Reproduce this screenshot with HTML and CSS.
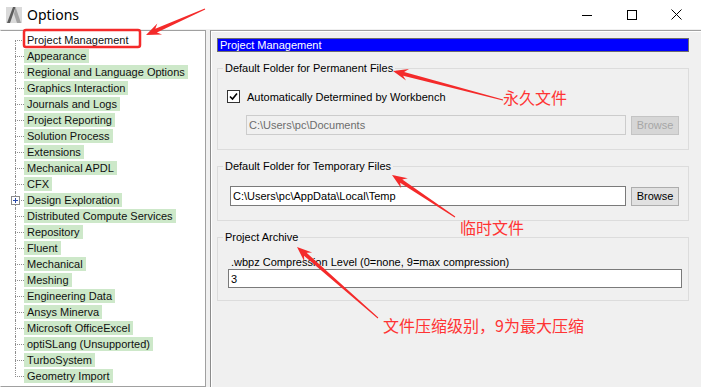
FILE: index.html
```html
<!DOCTYPE html>
<html lang="en">
<head>
    <meta charset="UTF-8">
    <meta name="viewport" content="width=device-width, initial-scale=1.0">
    <title>Options</title>
    <link rel="stylesheet" href="styles.css">
</head>
<body>
    <div class="window">
        <header class="titlebar">
            <svg class="app-icon" width="16" height="16" viewBox="0 0 16 16">
                <rect width="16" height="16" fill="#dadada"/>
                <polygon points="1,16 7,0 9.5,0 4,16" fill="#5c5c5c"/>
                <polygon points="9.5,0 15,16 11,16 8,7" fill="#a3a3a3"/>
            </svg>
            <span class="title">Options</span>
            <div class="controls">
                <span class="ctl">
                    <svg width="10" height="10" viewBox="0 0 10 10"><line x1="0" y1="5.5" x2="10" y2="5.5" stroke="#000"/></svg>
                </span>
                <span class="ctl">
                    <svg width="10" height="10" viewBox="0 0 10 10"><rect x="0.5" y="0.5" width="9" height="9" fill="none" stroke="#000"/></svg>
                </span>
                <span class="ctl">
                    <svg width="11" height="11" viewBox="0 0 11 11"><path d="M0.5,0.5 L10.5,10.5 M10.5,0.5 L0.5,10.5" stroke="#000"/></svg>
                </span>
            </div>
        </header>

        <div class="main">
            <ul class="tree">
                <li class="node"><span class="label plain">Project Management</span></li>
                <li class="node"><span class="label">Appearance</span></li>
                <li class="node"><span class="label">Regional and Language Options</span></li>
                <li class="node"><span class="label">Graphics Interaction</span></li>
                <li class="node"><span class="label">Journals and Logs</span></li>
                <li class="node"><span class="label">Project Reporting</span></li>
                <li class="node"><span class="label">Solution Process</span></li>
                <li class="node"><span class="label">Extensions</span></li>
                <li class="node"><span class="label">Mechanical APDL</span></li>
                <li class="node"><span class="label">CFX</span></li>
                <li class="node"><span class="expander"></span><span class="label">Design Exploration</span></li>
                <li class="node"><span class="label">Distributed Compute Services</span></li>
                <li class="node"><span class="label">Repository</span></li>
                <li class="node"><span class="label">Fluent</span></li>
                <li class="node"><span class="label">Mechanical</span></li>
                <li class="node"><span class="label">Meshing</span></li>
                <li class="node"><span class="label">Engineering Data</span></li>
                <li class="node"><span class="label">Ansys Minerva</span></li>
                <li class="node"><span class="label">Microsoft OfficeExcel</span></li>
                <li class="node"><span class="label">optiSLang (Unsupported)</span></li>
                <li class="node"><span class="label">TurboSystem</span></li>
                <li class="node"><span class="label">Geometry Import</span></li>
            </ul>

            <section class="panel">
                <div class="content">
                    <div class="bar">Project Management</div>

                    <div class="group">
                        <div class="group-title">Default Folder for Permanent Files</div>
                        <div class="check-row">
                            <span class="checkbox">
                                <svg width="11" height="11" viewBox="0 0 11 11"><path d="M2,5.5 L4.5,8 L9,2.5" fill="none" stroke="#000" stroke-width="1.6"/></svg>
                            </span>
                            <span>Automatically Determined by Workbench</span>
                        </div>
                        <div class="field-row row-perm">
                            <input class="field field-off field-perm" type="text" value="C:\Users\pc\Documents" readonly>
                            <button class="btn" disabled>Browse</button>
                        </div>
                    </div>

                    <div class="group">
                        <div class="group-title">Default Folder for Temporary Files</div>
                        <div class="field-row row-temp">
                            <input class="field field-temp" type="text" value="C:\Users\pc\AppData\Local\Temp">
                            <button class="btn">Browse</button>
                        </div>
                    </div>

                    <div class="group">
                        <div class="group-title">Project Archive</div>
                        <div class="zip-label">.wbpz Compression Level (0=none, 9=max compression)</div>
                        <input class="field field-zip" type="text" value="3">
                    </div>
                </div>
            </section>
        </div>

        <!-- screenshot markup -->
        <div class="annotations">
            <svg class="marks" width="701" height="387" viewBox="0 0 701 387">
                <rect x="24" y="30" width="116" height="17" rx="2" fill="none" stroke="#f42a2a" stroke-width="2.5"/>
                <polygon points="204.8,8.5 155.3,28.7 157.3,23.5 146,35 162.1,34.4 156.9,32.4 205.2,9.5" fill="#f42a2a"/>
                <polygon points="503.1,99.5 404.1,71.9 409.0,69.0 393,71 406.0,80.6 403.1,75.7 502.9,100.5" fill="#f42a2a"/>
                <polygon points="455.3,216.6 402.3,179.4 407.8,178.3 392,175 401.2,188.3 400.1,182.8 454.7,217.4" fill="#f42a2a"/>
                <polygon points="378.3,317.6 306.6,252.8 312.2,252.4 297,247 304.3,261.4 304.0,255.8 377.7,318.4" fill="#f42a2a"/>
            </svg>
            <span class="note note-perm">永久文件</span>
            <span class="note note-temp">临时文件</span>
            <span class="note note-zip">文件压缩级别，9为最大压缩</span>
        </div>
    </div>
</body>
</html>
```

FILE: styles.css
```css
* { margin: 0; padding: 0; box-sizing: border-box; }
body {
    width: 701px;
    height: 387px;
    overflow: hidden;
    background: #f0f0f0;
    color: #000;
    font-family: "Liberation Sans", Arial, sans-serif;
    font-size: 11px;
}
.window {
    position: relative;
    height: 387px;
}

/* title bar */
.titlebar {
    height: 29px;
    background: #fff;
    display: flex;
    align-items: center;
}
.app-icon { margin-left: 6px; }
.title {
    margin-left: 5px;
    font-family: "Noto Sans", sans-serif;
    font-size: 14px;
}
.controls {
    margin-left: auto;
    margin-right: 2px;
    display: flex;
    height: 100%;
}
.ctl {
    width: 45px;
    display: flex;
    align-items: center;
    justify-content: center;
}

/* layout */
.main {
    display: flex;
    padding-top: 1px;
    height: 358px;
}

/* tree */
.tree {
    list-style: none;
    width: 206px;
    flex-shrink: 0;
    background: #fff;
    border: 1px solid #a0a0a0;
    border-left-color: #fff;
    padding-top: 1px;
}
.node {
    position: relative;
    height: 16px;
    display: flex;
    align-items: center;
    padding-left: 23px;
}
.node::before {
    content: "";
    position: absolute;
    left: 14px;
    top: 8px;
    width: 9px;
    border-top: 1px dotted #8e8e8e;
}
.node::after {
    content: "";
    position: absolute;
    left: 14px;
    top: 0;
    bottom: 0;
    border-left: 1px dotted #8e8e8e;
}
.node:first-child::after { top: 8px; }
.node:last-child::after { bottom: 7px; }
.label {
    background: #cde8c9;
    padding: 0 3px;
    line-height: 14px;
    white-space: nowrap;
    color: #101010;
}
.label.plain { background: none; }
.expander {
    position: absolute;
    left: 10px;
    top: 4px;
    width: 9px;
    height: 9px;
    border: 1px solid #8a8a8a;
    background: #fff;
    z-index: 1;
}
.expander::before,
.expander::after {
    content: "";
    position: absolute;
    background: #2a4aa8;
}
.expander::before { left: 1px; top: 3px; width: 5px; height: 1px; }
.expander::after { left: 3px; top: 1px; width: 1px; height: 5px; }

/* options panel */
.panel {
    flex: 1;
    margin-left: 4px;
    border-top: 1px solid #a0a0a0;
    border-left: 1px solid #8c8c8c;
    box-shadow: inset 1px 1px 0 #fff;
    padding: 7px 0 0 6px;
}
.content { width: 472px; }
.bar {
    height: 14px;
    background: #0000ff;
    border: 1px solid #6d6d6d;
    color: #fff;
    line-height: 12px;
    padding-left: 2px;
}
.group {
    border: 1px solid #dcdcdc;
    margin-top: 16px;
}
.group-title {
    width: fit-content;
    margin: -7px 0 0 5px;
    padding: 0 2px;
    background: #f0f0f0;
    line-height: 13px;
}
.check-row {
    display: flex;
    align-items: center;
    gap: 7px;
    height: 13px;
    margin: 15px 0 0 9px;
}
.checkbox {
    width: 13px;
    height: 13px;
    border: 1px solid #333;
    background: #fff;
    display: flex;
}
.field-row {
    display: flex;
    align-items: center;
    gap: 5px;
}
.row-perm { margin: 12px 0 14px 28px; }
.row-temp { margin: 13px 0 14px 12px; }
.field {
    display: block;
    height: 20px;
    border: 1px solid #7a7a7a;
    background: #fff;
    padding: 0 2px;
    font: inherit;
    color: #000;
    outline: none;
}
.field-off {
    background: #f0f0f0;
    border-color: #cccccc;
    color: #6d6d6d;
}
.field-perm { width: 380px; }
.field-temp { width: 396px; }
.field-zip {
    width: 454px;
    height: 19px;
    margin: 0 0 12px 10px;
}
.zip-label {
    line-height: 13px;
    margin: 12px 0 0 13px;
}
.btn {
    width: 48px;
    height: 19px;
    border: 1px solid #adadad;
    background: #e1e1e1;
    font: inherit;
    color: #000;
}
.btn:disabled {
    background: #d6d6d6;
    border-color: #c4c4c4;
    color: #a6a6a6;
}

/* red annotations drawn over the screenshot */
.annotations {
    position: absolute;
    inset: 0;
    pointer-events: none;
}
.marks {
    position: absolute;
    left: 0;
    top: 0;
}
.note {
    position: absolute;
    font-family: "Noto Sans CJK SC", sans-serif;
    font-size: 16px;
    line-height: 18px;
    color: #ff3434;
    white-space: nowrap;
}
.note-perm { left: 503px; top: 88px; }
.note-temp { left: 460px; top: 218px; }
.note-zip { left: 383px; top: 316px; }
```
